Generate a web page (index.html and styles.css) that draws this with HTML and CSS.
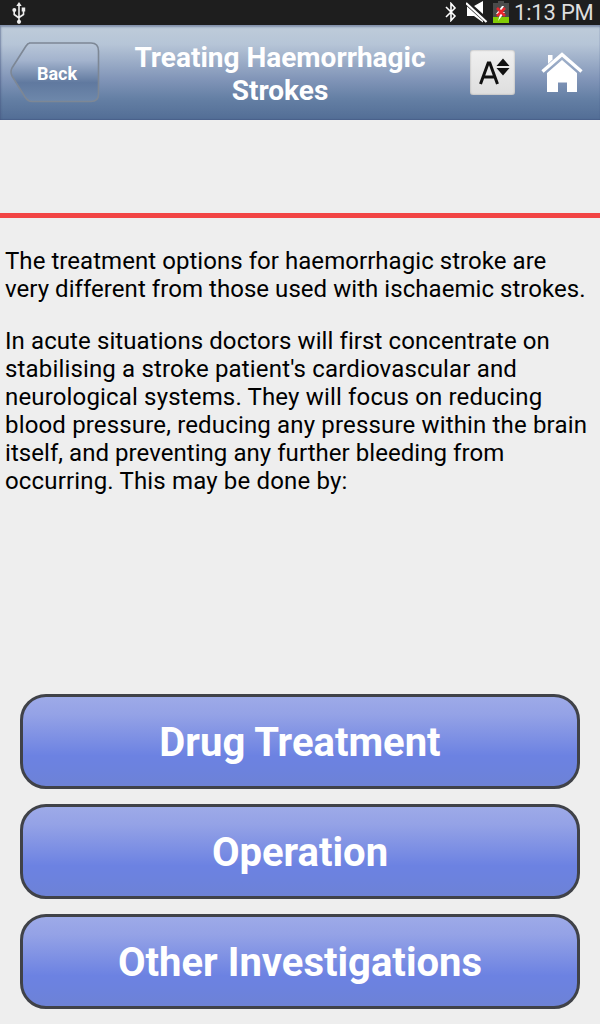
FILE: index.html
```
<!DOCTYPE html>
<html lang="en">
<head>
  <meta charset="UTF-8">
  <title>Treating Haemorrhagic Strokes</title>
  <meta name="viewport" content="width=device-width, initial-scale=1.0">
  <link rel="stylesheet" href="styles.css">
</head>
<body>
  <div class="status-bar">
    <svg class="usb" width="14" height="22" viewBox="0 0 14 22" fill="none" stroke="#eee" stroke-width="1.6">
      <path d="M7 3v16M2.200 9v3.500L7 16M11.500 9v3.500L7 15.500"/>
      <path d="M7 0l2.700 4H4.300z" fill="#eee" stroke="none"/>
      <circle cx="2.300" cy="8" r="2" fill="#eee" stroke="none"/>
      <path d="M9.700 5.500h3.500v4H9.700z" fill="#eee" stroke="none"/>
      <circle cx="7" cy="19.800" r="2.100" fill="#eee" stroke="none"/>
    </svg>
    <div class="status-right">
      <svg class="bluetooth" width="12" height="20" viewBox="0 0 12 20" fill="none" stroke="#fff" stroke-width="1.600">
        <path d="M1 5l9 9-4 4.500V1.500L10 6l-9 9"/>
      </svg>
      <svg class="mute" width="22" height="22" viewBox="0 0 22 22">
        <path d="M1 5h7l9-5v21.500L8 15H1z" fill="#fff"/>
        <path d="M0 1l22 20" stroke="#1e1e1e" stroke-width="5"/>
        <path d="M0 2l20.500 19" stroke="#fff" stroke-width="2.200"/>
      </svg>
      <svg class="battery" width="16" height="22" viewBox="0 0 16 22">
        <path d="M5 0h6v2h5v20H0V2h5z" fill="#4b4b4b"/>
        <path d="M0 16h16v6H0z" fill="#83cc05"/>
        <path d="M9 5l-6 8h4l-2 7 7-9H8l3-6z" fill="#fff"/>
        <path d="M4 7l8 8M12 7l-8 8" stroke="#e8262c" stroke-width="2.600"/>
      </svg>
      <span class="clock">1:13 PM</span>
    </div>
  </div>

  <div class="header">
    <a class="back" href="#">
      <svg class="back-shape" width="90" height="62" viewBox="0 0 90 62">
        <defs>
          <linearGradient id="backFill" x1="0" y1="0" x2="0" y2="1">
            <stop offset="0" stop-color="#b9c7d9"/>
            <stop offset="0.300" stop-color="#a3b3cd"/>
            <stop offset="0.680" stop-color="#60799f"/>
            <stop offset="1" stop-color="#6e88ab"/>
          </linearGradient>
        </defs>
        <path d="M19 1H81Q88.500 1 88.500 9V52Q88.500 59.500 81 59.500H22Q18 59.500 15 55L2 34Q0 30 2 26L16 4Q18 1 20 1z" fill="url(#backFill)" stroke="#7d8795" stroke-width="1.600"/>
      </svg>
      <span class="back-label">Back</span>
    </a>
    <h1>Treating Haemorrhagic<br>Strokes</h1>
    <a class="font-size" href="#">
      <svg width="45" height="45" viewBox="0 0 45 45">
        <path d="M10.500 34L18.200 13h1.600L27.500 34M13.500 27H24.500" fill="none" stroke="#111" stroke-width="3"/>
        <path d="M33 8.500l6.500 7.500h-13zM26.500 18h13L33 25.500z" fill="#111"/>
      </svg>
    </a>
    <a class="home" href="#">
      <svg width="42" height="42" viewBox="0 0 42 42">
        <path d="M7 4h4.500v4.500L7 13z" fill="#fff"/>
        <path d="M1.500 20.500L21 3.500l19.500 17" fill="none" stroke="#fff" stroke-width="3.400"/>
        <path d="M6 22L21 9 36 22v19H26V31.500h-9V41H6z" fill="#fff"/>
      </svg>
    </a>
  </div>

  <div class="divider"></div>

  <div class="content">
    <p>The treatment options for haemorrhagic stroke are<br>very different from those used with ischaemic strokes.</p>
    <p><span class="mid">In acute situations doctors will first concentrate on</span><br><span class="wide">stabilising a stroke patient's cardiovascular and</span><br><span class="wide">neurological systems. They will focus on reducing</span><br><span class="wide">blood pressure, reducing any pressure within the brain</span><br>itself, and preventing any further bleeding from<br><span class="wide">occurring. This may be done by:</span></p>
  </div>

  <div class="buttons">
    <button>Drug Treatment</button>
    <button>Operation</button>
    <button>Other Investigations</button>
  </div>
</body>
</html>
```
FILE: styles.css
```
body {
  margin: 0;
  height: 1024px;
  display: flex;
  flex-direction: column;
  overflow: hidden;
  font-family: Roboto, sans-serif;
  background-color: #eee;
  color: #000;
}
svg { display: block; }
.status-bar {
  height: 25px;
  display: flex;
  justify-content: space-between;
  background: #1e1e1e;
  color: #ddd;
}
.usb { margin: 2px 0 0 12px; }
.status-right {
  display: flex;
  padding-right: 7px;
}
.bluetooth { margin: 2px 9px 0 0; }
.mute { margin: 1px 5px 0 0; }
.battery { margin: 1px 5px 0 0; }
.clock {
  font-size: 22px;
  line-height: 26px;
  width: 79px;
  letter-spacing: -0.2px;
  white-space: nowrap;
}
.header {
  height: 95px;
  box-sizing: border-box;
  display: flex;
  align-items: flex-start;
  background: linear-gradient(#bfccda, #b6c5d7 20%, #8195b8 57%, #647fa4 78%, #526d95);
  box-shadow: inset 1px 2px 2px rgba(70, 85, 125, 0.5), inset 0 -1px 1px #4a608a;
}
.back {
  display: grid;
  margin: 17px 0 0 10px;
  width: 90px;
  height: 62px;
  text-decoration: none;
}
.back-shape, .back-label { grid-area: 1 / 1; }
.back-label {
  align-self: center;
  padding-left: 27px;
  color: #fff;
  font-size: 18px;
  font-weight: bold;
}
h1 {
  margin: 16px 0 0 20px;
  width: 320px;
  color: #fff;
  font-size: 28px;
  line-height: 33px;
  text-align: center;
}
.font-size {
  margin: 25px 0 0 30px;
  width: 45px;
  height: 45px;
  border-radius: 3px;
  background: linear-gradient(#f0f0f0, #dedede);
  box-shadow: inset 0 0 2px #999;
}
.home { margin: 26px 0 0 26px; }
.divider {
  margin-top: 93px;
  height: 5px;
  background: #f24444;
}
.content { padding: 29px 0 0 5px; }
.content p {
  margin: 0 0 24px;
  font-size: 24px;
  line-height: 28px;
  letter-spacing: 0.05px;
  white-space: nowrap;
}
.content .mid { letter-spacing: 0.09px; }
.content .wide { letter-spacing: 0.16px; }
.buttons {
  display: flex;
  flex-direction: column;
  gap: 15px;
  margin-top: auto;
  padding: 0 20px 15px;
}
button {
  height: 95px;
  padding: 2px 0 0;
  border: 3px solid #404248;
  border-radius: 26px;
  background: linear-gradient(#9daae8, #94a2e6 20%, #6c82e2 66%, #6c82de 80%, #6d82d6);
  color: #fff;
  font-family: Roboto, sans-serif;
  font-size: 40px;
  font-weight: bold;
}
```
